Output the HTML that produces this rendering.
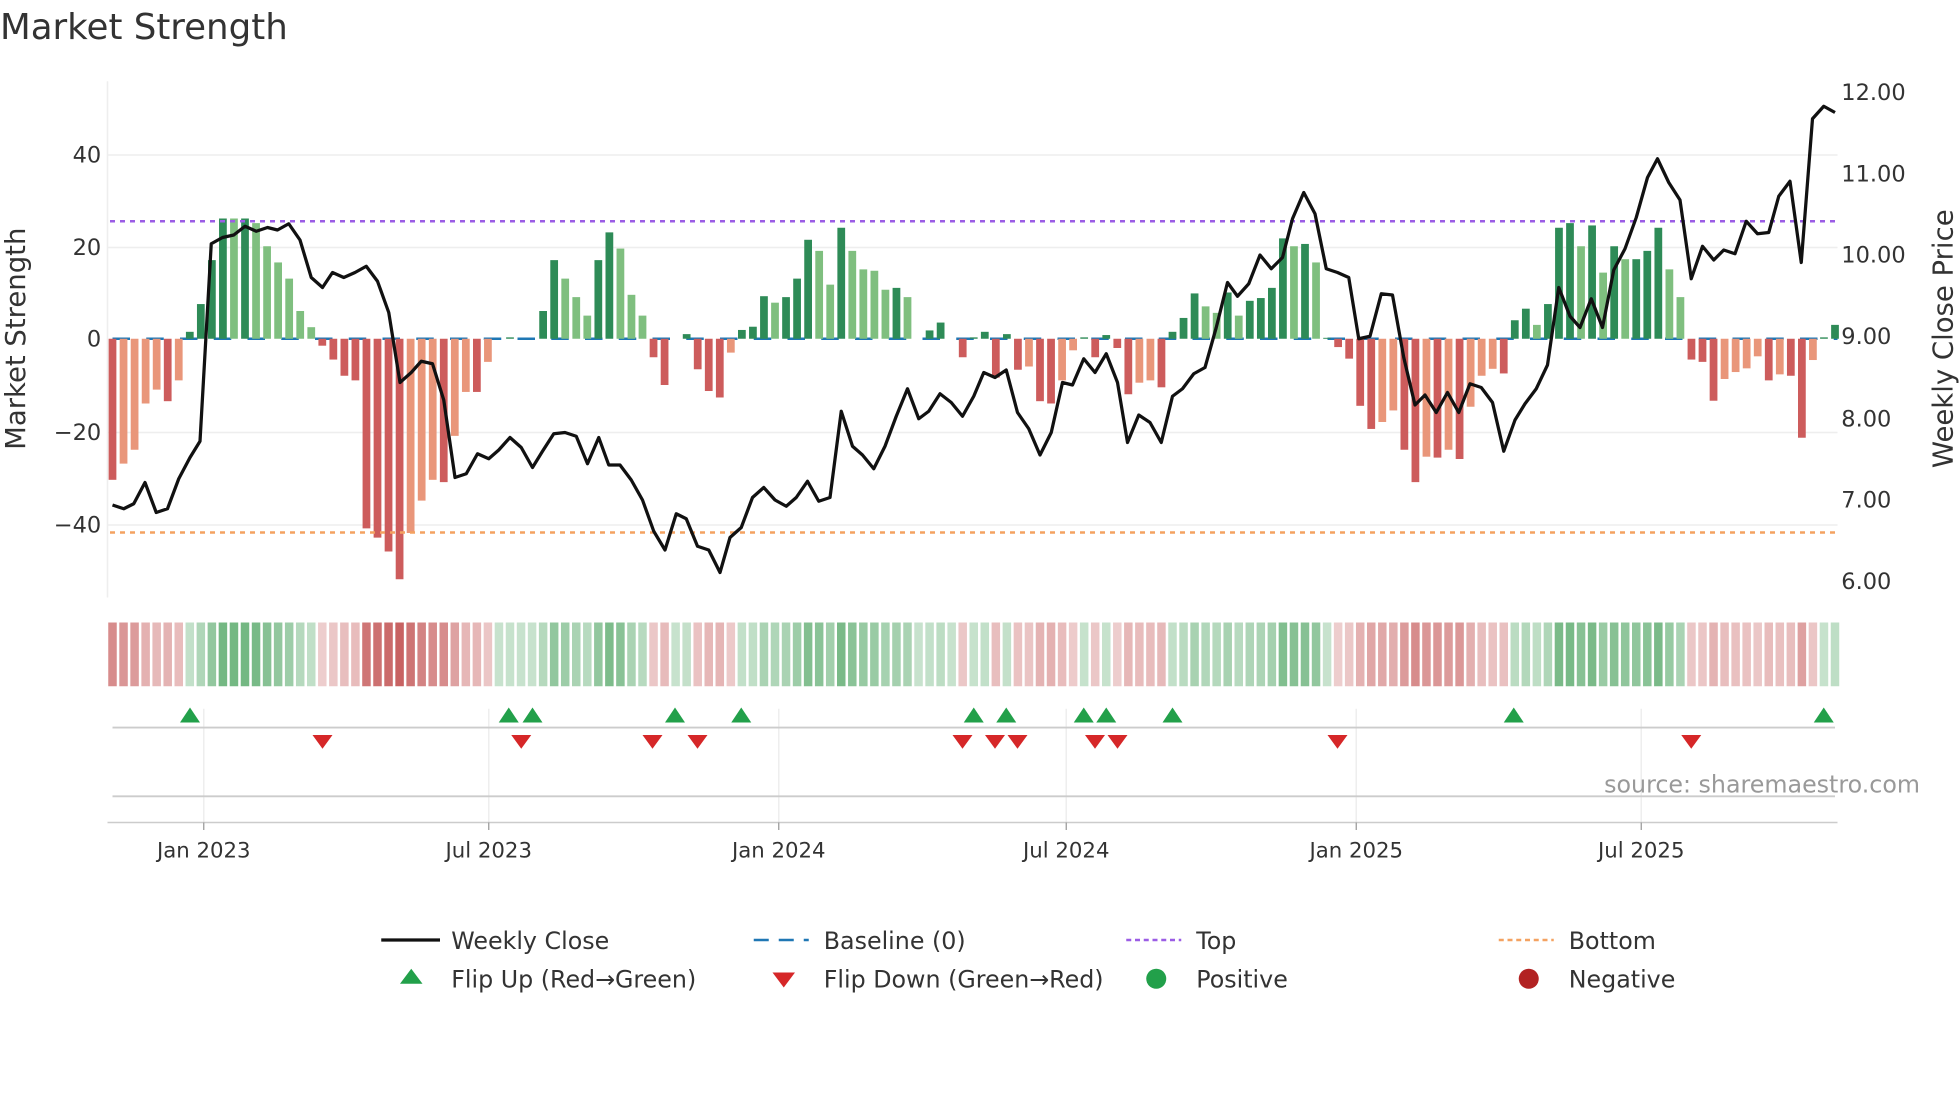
<!DOCTYPE html>
<html><head><meta charset="utf-8"><style>
html,body{margin:0;padding:0;background:#fff;}
svg{display:block;font-family:"DejaVu Sans","Liberation Sans",sans-serif;}
</style></head><body>
<svg id="c" width="1960" height="1102" viewBox="0 0 1568 881.6" xmlns="http://www.w3.org/2000/svg">
<text x="0" y="31" font-size="28.5" fill="#333">Market Strength</text>
<g id="grid" stroke="#eeeeee" stroke-width="1.2">
<line x1="86" x2="1470" y1="124" y2="124"/><line x1="86" x2="1470" y1="198" y2="198"/>
<line x1="86" x2="1470" y1="346" y2="346"/><line x1="86" x2="1470" y1="420" y2="420"/>
<line x1="86" x2="86" y1="65" y2="478"/>
</g>
<g font-size="18" fill="#333" text-anchor="end">
<text x="81" y="130">40</text><text x="81" y="204">20</text><text x="81" y="277">0</text>
<text x="81" y="352">−20</text><text x="81" y="426">−40</text>
</g>
<g font-size="18" fill="#333">
<text x="1473" y="80">12.00</text><text x="1473" y="145">11.00</text><text x="1473" y="210">10.00</text>
<text x="1473" y="275">9.00</text><text x="1473" y="341">8.00</text><text x="1473" y="406">7.00</text><text x="1473" y="471">6.00</text>
</g>
<text transform="translate(20,271) rotate(-90)" font-size="22" fill="#333" text-anchor="middle">Market Strength</text>
<text transform="translate(1562,271) rotate(-90)" font-size="22" fill="#333" text-anchor="middle">Weekly Close Price</text>
<line x1="90" x2="1470" y1="271" y2="271" stroke="#1f77b4" stroke-width="2" stroke-dasharray="14 13"/>
<g id="bars"></g>
<line x1="88" x2="1470" y1="177" y2="177" stroke="#9b5de5" stroke-width="2" stroke-dasharray="4 4"/>
<line x1="88" x2="1470" y1="426" y2="426" stroke="#f4a261" stroke-width="2" stroke-dasharray="4 4"/>
<polyline id="price" fill="none" stroke="#111" stroke-width="2.6" stroke-linejoin="round"/>
<g id="strip"></g>
<g stroke="#eeeeee" stroke-width="1.2">
<line x1="163" x2="163" y1="567" y2="658"/><line x1="391" x2="391" y1="567" y2="658"/>
<line x1="623" x2="623" y1="567" y2="658"/><line x1="853" x2="853" y1="567" y2="658"/>
<line x1="1085" x2="1085" y1="567" y2="658"/><line x1="1313" x2="1313" y1="567" y2="658"/>
</g>
<line x1="90" x2="1468" y1="582" y2="582" stroke="#cccccc" stroke-width="1.5"/>
<line x1="90" x2="1468" y1="637" y2="637" stroke="#cccccc" stroke-width="1.5"/>
<line x1="86" x2="1470" y1="658" y2="658" stroke="#cccccc" stroke-width="1.2"/>
<g stroke="#999" stroke-width="1">
<line x1="163" x2="163" y1="658" y2="664"/><line x1="391" x2="391" y1="658" y2="664"/>
<line x1="623" x2="623" y1="658" y2="664"/><line x1="853" x2="853" y1="658" y2="664"/>
<line x1="1085" x2="1085" y1="658" y2="664"/><line x1="1313" x2="1313" y1="658" y2="664"/>
</g>
<g id="flips"></g>
<text x="1536" y="634" font-size="19" fill="#999" text-anchor="end">source: sharemaestro.com</text>
<g font-size="17" fill="#333" text-anchor="middle">
<text x="163" y="686">Jan 2023</text><text x="391" y="686">Jul 2023</text><text x="623" y="686">Jan 2024</text>
<text x="853" y="686">Jul 2024</text><text x="1085" y="686">Jan 2025</text><text x="1313" y="686">Jul 2025</text>
</g>
<g font-size="19" fill="#333">
<line x1="305" x2="352" y1="752" y2="752" stroke="#111" stroke-width="2.6"/>
<text x="361" y="759">Weekly Close</text>
<line x1="603" x2="647" y1="752" y2="752" stroke="#1f77b4" stroke-width="2" stroke-dasharray="12 8"/>
<text x="659" y="759">Baseline (0)</text>
<line x1="901" x2="945" y1="752" y2="752" stroke="#9b5de5" stroke-width="2" stroke-dasharray="4 3"/>
<text x="957" y="759">Top</text>
<line x1="1199" x2="1243" y1="752" y2="752" stroke="#f4a261" stroke-width="2" stroke-dasharray="4 3"/>
<text x="1255" y="759">Bottom</text>
<polygon points="329,775 320,787 338,787" fill="#22a04a"/>
<text x="361" y="790">Flip Up (Red→Green)</text>
<polygon points="627,790 618,778 636,778" fill="#d62728"/>
<text x="659" y="790">Flip Down (Green→Red)</text>
<circle cx="925" cy="783" r="8" fill="#22a04a"/>
<text x="957" y="790">Positive</text>
<circle cx="1223" cy="783" r="8" fill="#b22222"/>
<text x="1255" y="790">Negative</text>
</g>
</svg>
<script>
var NS="http://www.w3.org/2000/svg";
function el(p,t,a){var e=document.createElementNS(NS,t);for(var k in a)e.setAttribute(k,a[k]);p.appendChild(e);return e;}
var V=[[-30.5,1],[-27,0],[-24,0],[-14,0],[-11,0],[-13.5,1],[-9,0],[1.5,1],[7.5,1],[17,1],[26,1],[26,0],[26,1],[25,0],[20,0],[16.5,0],[13,0],[6,0],[2.5,0],[-1.5,1],[-4.5,1],[-8,1],[-9,1],[-41,1],[-43,1],[-46,1],[-52,1],[-42,0],[-35,0],[-30.5,0],[-31,1],[-21,0],[-11.5,0],[-11.5,1],[-5,0],[0,1],[0.3,1],[0,1],[0,1],[6,1],[17,1],[13,0],[9,0],[5,0],[17,1],[23,1],[19.5,0],[9.5,0],[5,0],[-4,1],[-10,1],[0,1],[1,1],
[-6.6,1],[-11.3,1],[-12.7,1],[-3,0],[1.9,1],[2.6,1],[9.2,1],[7.8,0],[9,1],[13,1],[21.4,1],[19,0],[11.7,0],[24,1],[19,0],[15,0],[14.7,0],[10.6,0],[11,1],[9,0],[0,1],[1.8,1],[3.5,1],[0,1],[-4,1],[0.3,1],[1.5,1],
[-8.4,1],[1,1],[-6.7,1],[-6,0],[-13.5,1],[-14,1],[-9,0],[-2.5,0],[0.3,1],[-4,1],[0.8,1],[-2,1],[-12,1],[-9.5,0],[-9,0],[-10.5,1],[1.5,1],[4.5,1],[9.8,1],[7,0],[5.6,0],[10,1],[5,0],[8.2,1],[8.8,1],[11,1],[21.7,1],[20,0],[20.5,1],[16.5,0],[0.2,1],[-1.8,1],[-4.3,1],[-14.5,1],[-19.5,1],[-18,0],[-15.5,0],[-24,1],[-31,1],
[-25.5,0],[-25.7,1],[-24,0],[-26,1],[-14.7,0],[-8,0],[-6.5,0],[-7.5,1],[4,1],[6.5,1],[3,0],[7.5,1],[24,1],[25,1],[20,0],[24.5,1],[14.3,0],[20,1],[17.2,0],[17.2,1],[19,1],[24,1],[15,0],[9,0],[-4.5,1],[-5,1],[-13.4,1],[-8.7,0],[-7.2,0],[-6.4,0],[-3.8,0],[-9,1],[-7.7,0],[-8,1],[-21.4,1],[-4.6,0],[0.3,1],[3,1]];
var n=V.length, x0=90, dx=(1468-90)/(n-1);
var bars=document.getElementById('bars'), strip=document.getElementById('strip');
for(var i=0;i<n;i++){
 var v=V[i][0],d=V[i][1],x=x0+dx*i,h=Math.abs(v)*3.7;
 var c=v>=0?(d?'#2e8b57':'#7fbf7f'):(d?'#cd5c5c':'#e9967a');
 if(h>0.3) el(bars,'rect',{x:x-3.1,y:v>=0?271-h:271,width:6.2,height:h,fill:c});
 var a,fc;
 if(v>=0){a=0.3+0.45*Math.min(v/26,1);fc='rgba(70,160,90,'+a.toFixed(2)+')';}
 else{a=0.25+0.6*Math.min(-v/50,1);fc='rgba(190,70,70,'+a.toFixed(2)+')';}
 el(strip,'rect',{x:x-3.4,y:498,width:6.8,height:51,fill:fc});
}
var P=[[90,404],[99,407],[107,403],[116,386],[125,410],[134,407],[143,383],[152,366],[160,353],[169,195],[178,190],[187,188],[196,181],[205,185],[214,182],[222,184],[231,179],[240,192],[249,222],[258,230],[266,218],[275,222],[284,218],[293,213],[302,225],[311,250],[320,306],[329,298],[337,289],[346,291],[355,320],[364,382],[373,379],[382,363],[391,367],[399,360],[408,350],[417,358],[426,374],[434,361],[443,347],[452,346],[461,349],[470,371],[479,350],[487,372],[496,372],[505,384],[514,400],[523,425],[532,440],[541,411],[549,415],[558,437],[567,440],[576,458],[584,430],[593,422],[602,398],[611,390],[620,400],[629,405],[637,398],[646,385],[655,401],[664,398],[673,329],[682,357],[690,364],[699,375],[708,357],[717,333],[726,311],[735,335],[743,329],[752,315],[761,322],[770,333],[779,317],[787,298],[796,302],[805,296],[814,330],[823,343],[832,364],[841,346],[850,306],[858,308],[867,287],[876,298],[885,283],[894,306],[902,354],[911,332],[920,338],[929,354],[938,317],[946,311],[955,299],[964,294],[973,262],[982,226],[990,237],[999,227],[1008,204],[1017,215],[1026,206],[1034,175],[1043,154],[1052,171],[1061,215],[1070,218],[1079,222],[1087,271],[1096,269],[1105,235],[1114,236],[1123,286],[1132,324],[1140,316],[1149,330],[1158,314],[1167,330],[1176,307],[1185,310],[1194,322],[1203,361],[1212,336],[1220,323],[1229,311],[1238,292],[1247,230],[1256,253],[1264,262],[1273,239],[1282,262],[1291,216],[1300,199],[1309,174],[1318,142],[1326,127],[1335,146],[1344,160],[1353,223],[1362,197],[1371,208],[1379,200],[1388,203],[1397,177],[1406,187],[1415,186],[1423,157],[1432,145],[1441,210],[1450,95],[1459,85],[1468,90]];
document.getElementById('price').setAttribute('points',P.map(function(p){return p.join(',')}).join(' '));
var fl=document.getElementById('flips');
[152,407,426,540,593,779,805,867,885,938,1211,1459].forEach(function(x){el(fl,'polygon',{points:x+',566 '+(x-8)+',578 '+(x+8)+',578',fill:'#22a04a'});});
[258,417,522,558,770,796,814,876,894,1070,1353].forEach(function(x){el(fl,'polygon',{points:x+',599 '+(x-8)+',588 '+(x+8)+',588',fill:'#d62728'});});
</script>
</body></html>
